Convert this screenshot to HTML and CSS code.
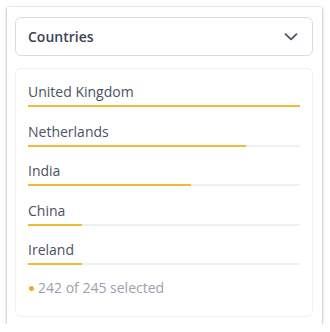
FILE: index.html
```html
<!DOCTYPE html>
<html>
<head>
<meta charset="utf-8">
<link rel="stylesheet" href="styles.css">
</head>
<body>
<div class="panel">
  <div class="select">
    <span class="select-label">Countries</span>
    <svg class="chevron" width="14" height="8" viewBox="0 0 14 8"><path d="M1.5 1.2 L7 6.4 L12.5 1.2" fill="none" stroke="#4a5466" stroke-width="1.8" stroke-linecap="round" stroke-linejoin="round"/></svg>
  </div>
  <div class="list">
    <div class="row"><div class="name">United Kingdom</div><div class="track"><div class="bar" style="width:100%"></div></div></div>
    <div class="row"><div class="name">Netherlands</div><div class="track"><div class="bar" style="width:80%"></div></div></div>
    <div class="row"><div class="name">India</div><div class="track"><div class="bar" style="width:60%"></div></div></div>
    <div class="row"><div class="name">China</div><div class="track"><div class="bar" style="width:20%"></div></div></div>
    <div class="row"><div class="name">Ireland</div><div class="track"><div class="bar" style="width:20%"></div></div></div>
    <div class="footer"><span class="dot"></span>242 of 245 selected</div>
  </div>
</div>
</body>
</html>
```
FILE: styles.css
```css
html, body {
  margin: 0;
  padding: 0;
  background: #ffffff;
}
body {
  font-family: "Open Sans", "DejaVu Sans", sans-serif;
  font-size: 14px;
}
.panel {
  margin: 7px 8px 0 7px;
  width: 315px;
  height: 317px;
  box-sizing: border-box;
  padding: 10px 9px 7px 8px;
  background: #fff;
  box-shadow: 0 1px 3px rgba(0,0,0,0.35), 0 0 1px rgba(0,0,0,0.15);
  display: flex;
  flex-direction: column;
  gap: 12px;
}
.select {
  height: 39px;
  box-sizing: border-box;
  border: 1px solid #d9dde3;
  border-radius: 6px;
  display: flex;
  align-items: center;
  justify-content: space-between;
  padding: 0 14px 0 12px;
}
.select-label {
  font-weight: 600;
  color: #3b4354;
  font-size: 14px;
}
.chevron {
  display: block;
}
.list {
  flex: 1;
  border: 1px solid #eff1f4;
  border-radius: 6px;
  padding: 13px 12px 0 12px;
  display: flex;
  flex-direction: column;
}
.row {
  margin-bottom: 14.5px;
}
.name {
  line-height: 20px;
  color: #4b5262;
  margin-bottom: 3px;
}
.track {
  height: 2px;
  background: #eef0f3;
}
.bar {
  height: 2px;
  background: #f0b93a;
}
.footer {
  margin-top: -1.5px;
  line-height: 20px;
  color: #9ba1ad;
  display: flex;
  align-items: center;
}
.dot {
  width: 5px;
  height: 5px;
  border-radius: 50%;
  background: #f0ac1c;
  margin: 0 4px 0 1px;
}
```
